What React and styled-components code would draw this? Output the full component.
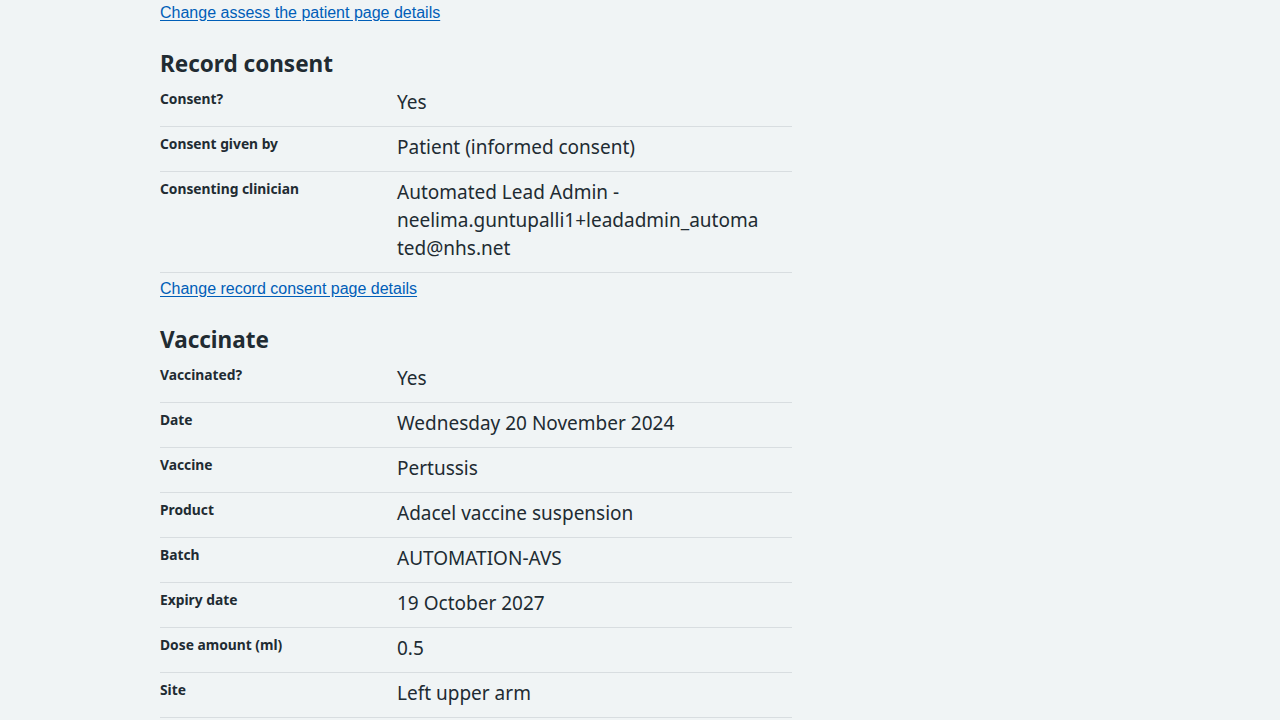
import React from 'react';
import styled, { createGlobalStyle } from 'styled-components';

const GlobalStyle = createGlobalStyle`
  html, body {
    margin: 0;
    padding: 0;
    background-color: #f0f4f5;
  }
  body {
    font-family: "Noto Sans", "Liberation Sans", sans-serif;
    color: #212b32;
  }
`;

const Page = styled.main`
  width: 632px;
  margin-left: 160px;
  padding-top: 1px;
`;

const ChangeLink = styled.a`
  display: block;
  margin-top: ${(p) => p.$gap || 0}px;
  font-family: "Liberation Sans", Arial, sans-serif;
  font-size: 16px;
  line-height: 24px;
  color: #005eb8;
  text-decoration: underline;
  text-underline-offset: 2px;
  cursor: pointer;
`;

const Section = styled.section`
  margin-top: 23px;
`;

const Heading = styled.h2`
  margin: 0 0 2px;
  font-size: 22.5px;
  line-height: 32px;
  font-weight: 700;
`;

const List = styled.dl`
  margin: 0;
`;

const Row = styled.div`
  display: grid;
  grid-template-columns: 237px 1fr;
  padding: 8px 0;
  border-bottom: 1px solid #d8dde0;
`;

const Key = styled.dt`
  font-size: 13.8px;
  line-height: 24px;
  font-weight: 700;
  margin-top: -3px;
`;

const Value = styled.dd`
  margin: -2px 0 2px;
  padding-right: 32px;
  font-size: 19px;
  line-height: 28px;
  overflow-wrap: anywhere;
`;

const consent = [
  ['Consent?', 'Yes'],
  ['Consent given by', 'Patient (informed consent)'],
  ['Consenting clinician', 'Automated Lead Admin - neelima.guntupalli1+leadadmin_automated@nhs.net'],
];

const vaccinate = [
  ['Vaccinated?', 'Yes'],
  ['Date', 'Wednesday 20 November 2024'],
  ['Vaccine', 'Pertussis'],
  ['Product', 'Adacel vaccine suspension'],
  ['Batch', 'AUTOMATION-AVS'],
  ['Expiry date', '19 October 2027'],
  ['Dose amount (ml)', '0.5'],
  ['Site', 'Left upper arm'],
];

const SummaryList = ({ rows }) => (
  <List>
    {rows.map(([k, v]) => (
      <Row key={k}>
        <Key>{k}</Key>
        <Value>{v}</Value>
      </Row>
    ))}
  </List>
);

export default function App() {
  return (
    <>
      <GlobalStyle />
      <Page>
        <ChangeLink>Change assess the patient page details</ChangeLink>
        <Section>
          <Heading>Record consent</Heading>
          <SummaryList rows={consent} />
          <ChangeLink $gap={4}>Change record consent page details</ChangeLink>
        </Section>
        <Section>
          <Heading>Vaccinate</Heading>
          <SummaryList rows={vaccinate} />
        </Section>
      </Page>
    </>
  );
}
